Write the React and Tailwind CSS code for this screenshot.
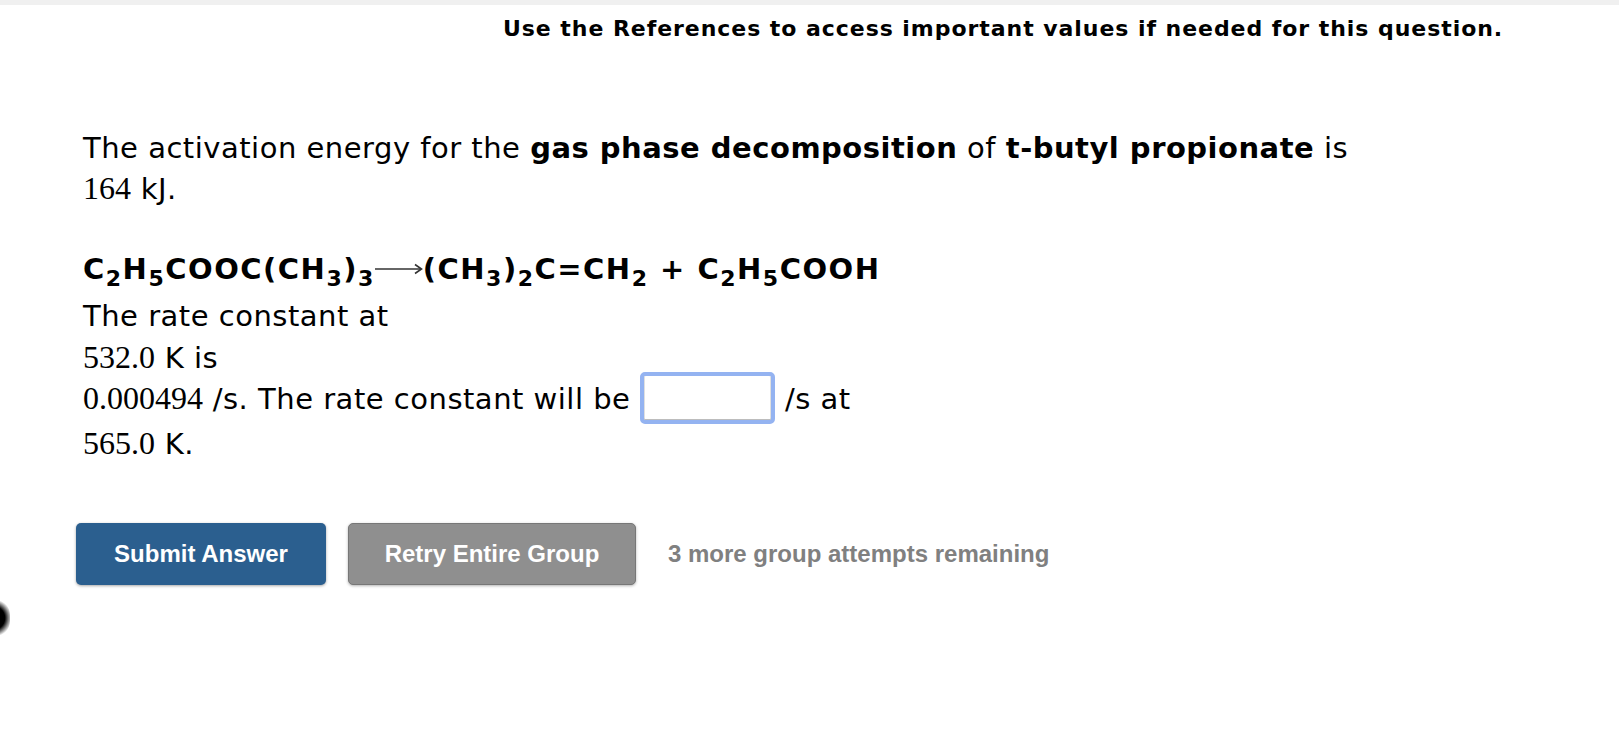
import React from "react";

function Sub({ children }) {
  return <span className="relative top-[7px] text-[22px]">{children}</span>;
}

function Arrow() {
  return (
    <svg width="48" height="16" viewBox="0 0 48 16" className="inline-block align-[2px]">
      <line x1="0" y1="8" x2="46" y2="8" stroke="#333" strokeWidth="1.6" />
      <path d="M40 3.5 L46.5 8 L40 12.5" fill="none" stroke="#333" strokeWidth="1.6" />
    </svg>
  );
}

export default function App() {
  const serif = "font-['Liberation_Serif',serif] text-[32px] tracking-normal";
  return (
    <div className="relative min-h-[755px] bg-white overflow-hidden text-black font-['DejaVu_Sans',sans-serif]">
      <div className="h-[5px] bg-[#f0f0f0]" />
      <div className="pl-[503px] pt-[10px] text-[22px] tracking-[0.95px] font-bold leading-[28px] whitespace-nowrap">
        Use the References to access important values if needed for this question.
      </div>

      <div className="pl-[83px] mt-[85px] text-[29px] tracking-[0.5px] leading-[40px]">
        <div className="whitespace-nowrap">
          The activation energy for the <b>gas phase decomposition</b> of <b>t-butyl propionate</b> is
        </div>
        <div>
          <span className={serif}>164</span> kJ.
        </div>

        <div className="mt-[40px] h-[47px] font-bold tracking-[1.5px] whitespace-nowrap">
          C<Sub>2</Sub>H<Sub>5</Sub>COOC(CH<Sub>3</Sub>)<Sub>3</Sub>
          <Arrow />
          (CH<Sub>3</Sub>)<Sub>2</Sub>C=CH<Sub>2</Sub> + C<Sub>2</Sub>H<Sub>5</Sub>COOH
        </div>

        <div className="h-[41px]">The rate constant at</div>
        <div className="h-[41px]">
          <span className={serif}>532.0</span> K is
        </div>
        <div className="h-[45px] whitespace-nowrap">
          <span className={serif}>0.000494</span> /s. The rate constant will be{" "}
          <span className="inline-block -mt-[8px] align-[-15px] h-[52px] w-[135px] rounded-[5px] border-[4px] border-[#94b3f1] bg-white shadow-[inset_0_-1px_0_#bdbdbd,inset_1px_0_0_#e0e0e0,inset_-1px_0_0_#e0e0e0]" />{" "}
          /s at
        </div>
        <div className="h-[40px]">
          <span className={serif}>565.0</span> K.
        </div>
      </div>

      <div className="pl-[76px] mt-[60px] flex items-center font-['Liberation_Sans',Arial,sans-serif] font-bold text-[24px]">
        <button className="h-[62px] w-[250px] rounded-[5px] bg-[#2b5f8f] text-white shadow-[0_1px_3px_rgba(0,0,0,0.35)]">
          Submit Answer
        </button>
        <button className="ml-[22px] h-[62px] w-[288px] rounded-[5px] bg-[#8f8f8f] border border-[#777] text-white shadow-[0_1px_3px_rgba(0,0,0,0.3)]">
          Retry Entire Group
        </button>
        <span className="ml-[32px] text-[#808080]">3 more group attempts remaining</span>
      </div>

      <div className="absolute left-[-24px] top-[598px] w-[34px] h-[40px] rounded-full bg-[radial-gradient(circle,#000_45%,rgba(0,0,0,0)_72%)]" />
    </div>
  );
}
